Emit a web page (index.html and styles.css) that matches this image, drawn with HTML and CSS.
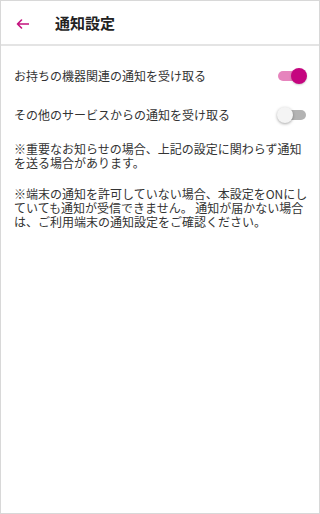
FILE: index.html
```html
<!DOCTYPE html>
<html lang="ja">
<head>
<meta charset="utf-8">
<title>通知設定</title>
<link rel="stylesheet" href="styles.css">
</head>
<body>
<div class="screen">
  <header class="appbar">
    <button class="back" aria-label="戻る">
      <svg width="13" height="10" viewBox="0 0 13 10"><path d="M12.5 5H1.5M5.5 1L1.5 5L5.5 9" fill="none" stroke="#c4127e" stroke-width="1.6" stroke-linecap="round" stroke-linejoin="round"/></svg>
    </button>
    <h1 class="title">通知設定</h1>
  </header>
  <main class="content">
    <div class="row">
      <span class="label">お持ちの機器関連の通知を受け取る</span>
      <span class="switch on"><span class="track"></span><span class="thumb"></span></span>
    </div>
    <div class="row">
      <span class="label">その他のサービスからの通知を受け取る</span>
      <span class="switch"><span class="track"></span><span class="thumb"></span></span>
    </div>
    <p class="note">※重要なお知らせの場合、上記の設定に関わらず通知を送る場合があります。</p>
    <p class="note">※端末の通知を許可していない場合、本設定をONにし<br>ていても通知が受信できません。 通知が届かない場合<br>は、ご利用端末の通知設定をご確認ください。</p>
  </main>
</div>
</body>
</html>
```

FILE: styles.css
```css
* { box-sizing: border-box; }
html, body { margin: 0; padding: 0; background: #fff; }
body {
  font-family: "Noto Sans CJK JP", "Noto Sans", sans-serif;
  color: #333;
}
.screen {
  width: 320px;
  height: 514px;
  border: 1px solid #d8d8d8;
  display: flex;
  flex-direction: column;
}
.appbar {
  height: 45px;
  flex: none;
  display: flex;
  align-items: center;
  border-bottom: 2px solid #e4e4e4;
  padding-left: 15px;
}
.back {
  border: 0;
  background: none;
  padding: 0;
  width: 13px;
  height: 10px;
  display: flex;
  margin-top: 2px;
}
.title {
  margin: 0 0 0 26px;
  font-size: 15px;
  font-weight: 700;
  color: #222;
  line-height: 20px;
}
.content {
  padding: 10px 8px 0 13px;
}
.row {
  height: 39px;
  display: flex;
  align-items: center;
  justify-content: space-between;
}
.label {
  font-size: 12px;
  line-height: 16px;
  color: #333;
}
.switch {
  position: relative;
  width: 30px;
  height: 16px;
  margin-right: 4px;
  flex: none;
}
.track {
  position: absolute;
  left: 1px;
  right: 1px;
  top: 3px;
  height: 10px;
  border-radius: 5px;
  background: #b3b3b3;
}
.thumb {
  position: absolute;
  top: 0;
  left: 0;
  width: 16px;
  height: 16px;
  border-radius: 50%;
  background: #f4f4f4;
  box-shadow: 0 1px 3px rgba(0,0,0,0.35);
}
.switch.on .track { background: #e684bd; }
.switch.on .thumb {
  left: auto;
  right: 0;
  background: #c5057f;
  box-shadow: 0 1px 2px rgba(0,0,0,0.2);
}
.note {
  margin: 8px 0 17px;
  font-size: 12px;
  line-height: 14px;
  color: #333;
}
```
